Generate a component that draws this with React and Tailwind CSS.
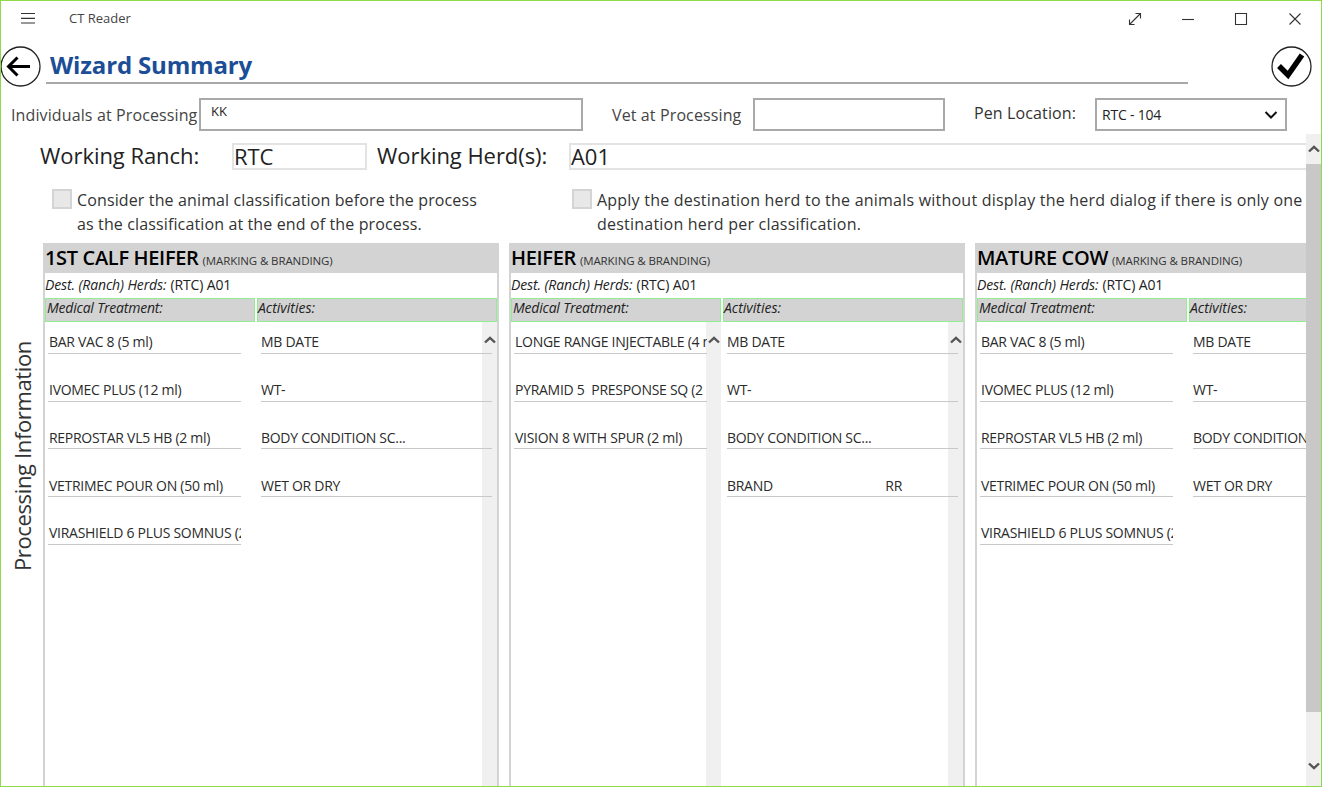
import React from "react";

const F = "font-['Open_Sans','Noto_Sans',sans-serif]";

function Chevron({ dir = "up", className = "" }) {
  return (
    <svg width="12" height="8" viewBox="0 0 12 8" className={className}>
      <path d={dir === "up" ? "M1 6.5 L6 1.8 L11 6.5" : "M1 1.5 L6 6.2 L11 1.5"} fill="none" stroke="#555" strokeWidth="2.4" />
    </svg>
  );
}

function Row({ text, extra, w, inset }) {
  return (
    <div className={`h-[47.75px] ${w} shrink-0 border-b border-[#c8c8c8] flex items-end`}>
      <div className={`flex h-[22px] w-full items-center overflow-hidden whitespace-pre ${inset} text-[14px] tracking-[-0.28px] text-[#2b2b2b]`}>
        <span>{text}</span>
        {extra && <span className="ml-auto mr-[56px]">{extra}</span>}
      </div>
    </div>
  );
}

function ListColumn({ items, width, pad, rowW, scroll, inset }) {
  return (
    <div className={`relative h-full shrink-0 ${width} ${pad}`}>
      {scroll && (
        <div className="absolute right-0 top-0 bottom-0 flex w-[15px] justify-center bg-[#f0f0f0] pt-[14px]">
          <Chevron />
        </div>
      )}
      <div className="relative -mt-[16px] flex flex-col">
        {items.map((it, i) => (
          <Row key={i} text={it.t} extra={it.x} w={rowW} inset={inset} />
        ))}
      </div>
    </div>
  );
}

function Panel({ title, medical, activities, medScroll, actScroll }) {
  return (
    <div className="flex h-full w-[456px] shrink-0 flex-col border-x-2 border-t-0 border-[#d3d3d3]">
      <div className="-mx-[2px] flex h-[30px] shrink-0 items-center whitespace-nowrap bg-[#d3d3d3] pl-[2px] text-black">
        <span className="text-[20px] font-semibold tracking-[-0.33px]">{title}</span>
        <span className="ml-[4px] mt-[5px] text-[11.5px] tracking-[-0.1px] text-[#333]">(MARKING &amp; BRANDING)</span>
      </div>
      <div className="flex h-[25px] shrink-0 items-center whitespace-nowrap pb-[2px] text-[14px] tracking-[-0.12px] text-[#222]">
        <span className="italic">Dest. (Ranch) Herds:</span>
        <span className="ml-[4px]">(RTC) A01</span>
      </div>
      <div className="flex h-[24px] shrink-0 gap-[2px] text-[14px] italic tracking-[-0.2px] text-[#222]">
        <div className="w-[210px] border border-[#90ee90] bg-[#d3d3d3] pl-[1px] leading-[17px]">Medical Treatment:</div>
        <div className="w-[240px] border border-[#90ee90] bg-[#d3d3d3] leading-[17px] tracking-[0px]">Activities:</div>
      </div>
      <div className="flex min-h-0 flex-1 gap-[2px] overflow-hidden">
        <ListColumn items={medical} width="w-[210px]" pad="pl-[3px]" rowW="w-[193px]" inset="pl-[1px]" scroll={medScroll} />
        <ListColumn items={activities} width="w-[240px]" pad="pl-[4px]" rowW="w-[231px]" inset="pl-0" scroll={actScroll} />
      </div>
    </div>
  );
}

const med1 = [
  { t: "BAR VAC 8 (5 ml)" },
  { t: "IVOMEC PLUS (12 ml)" },
  { t: "REPROSTAR VL5 HB (2 ml)" },
  { t: "VETRIMEC POUR ON (50 ml)" },
  { t: "VIRASHIELD 6 PLUS SOMNUS (2 ml)" },
];
const act1 = [{ t: "MB DATE" }, { t: "WT-" }, { t: "BODY CONDITION SC..." }, { t: "WET OR DRY" }];
const med2 = [
  { t: "LONGE RANGE INJECTABLE (4 ml)" },
  { t: "PYRAMID 5  PRESPONSE SQ (2 ml)" },
  { t: "VISION 8 WITH SPUR (2 ml)" },
];
const act2 = [{ t: "MB DATE" }, { t: "WT-" }, { t: "BODY CONDITION SC..." }, { t: "BRAND", x: "RR" }];

export default function App() {
  return (
    <div className={`${F} flex h-[787px] w-[1322px] flex-col overflow-hidden border border-[#8fd94a] bg-white text-[#333]`}>
      {/* title bar */}
      <div className="flex h-[44px] shrink-0 items-start">
        <svg width="16" height="12" viewBox="0 0 16 12" className="ml-[19px] mt-[11px]">
          <path d="M1 1.5H15M1 6.3H15M1 11H15" stroke="#333" strokeWidth="1.2" fill="none" />
        </svg>
        <span className="ml-[33px] mt-[8px] text-[13px] leading-[18px] text-[#444]">CT Reader</span>
        <div className="ml-auto flex items-start">
          <svg width="16" height="16" viewBox="0 0 16 16" className="mt-[10px] mr-[38px]">
            <path d="M2.5 13.5 L13.5 2.5 M8.5 2.5H13.5V7.5 M2.5 8.5V13.5H7.5" stroke="#333" strokeWidth="1.1" fill="none" />
          </svg>
          <svg width="14" height="14" viewBox="0 0 14 14" className="mt-[11px] mr-[39px]">
            <path d="M1 7.5H13" stroke="#333" strokeWidth="1.1" fill="none" />
          </svg>
          <svg width="14" height="14" viewBox="0 0 14 14" className="mt-[11px] mr-[40px]">
            <path d="M1.5 1.5H12.5V12.5H1.5Z" stroke="#333" strokeWidth="1.1" fill="none" />
          </svg>
          <svg width="14" height="14" viewBox="0 0 14 14" className="mt-[11px] mr-[19px]">
            <path d="M1.5 1.5L12.5 12.5M12.5 1.5L1.5 12.5" stroke="#333" strokeWidth="1.1" fill="none" />
          </svg>
        </div>
      </div>

      {/* heading */}
      <div className="flex h-[53px] shrink-0 items-start">
        <svg width="41" height="41" viewBox="0 0 41 41" className="-ml-[1px] mt-[1px] shrink-0">
          <circle cx="20.5" cy="20.5" r="19.5" fill="white" stroke="#222" strokeWidth="1.3" />
          <path d="M30 20.5H9M17.5 11.5L8.5 20.5L17.5 29.5" fill="none" stroke="#000" strokeWidth="3" />
        </svg>
        <div className="ml-[5px] h-[39px] w-[1142px] shrink-0 border-b-2 border-[#a8a8a8] pl-[4px] text-[24px] font-bold leading-[39px] tracking-[-0.15px] text-[#1b4e96]">
          Wizard Summary
        </div>
        <svg width="41" height="41" viewBox="0 0 41 41" className="ml-[83px] mt-[1px] shrink-0">
          <circle cx="20.5" cy="20.5" r="19.5" fill="white" stroke="#222" strokeWidth="1.3" />
          <path d="M8 20L17 29L31 9" fill="none" stroke="#000" strokeWidth="5.5" />
        </svg>
      </div>

      {/* form row */}
      <div className="flex h-[33px] shrink-0 items-stretch text-[16px] tracking-[0.12px]">
        <span className="ml-[10px] flex w-[188px] items-center whitespace-nowrap text-[#444]">Individuals at Processing</span>
        <div className="w-[384px] border-2 border-[#a9a9a9] pl-[10px] pt-[2px] text-[13px] leading-[18px] text-[#222]">KK</div>
        <span className="ml-[29px] flex w-[141px] items-center whitespace-nowrap text-[#444]">Vet at Processing</span>
        <div className="w-[192px] border-2 border-[#a9a9a9]" />
        <span className="ml-[29px] flex w-[121px] items-center whitespace-nowrap pb-[3px] text-[#333]">Pen Location:</span>
        <div className="flex w-[192px] items-center justify-between border-2 border-[#a9a9a9] pl-[5px] pr-[7px] text-[14px] tracking-[-0.2px] text-[#222]">
          <span>RTC - 104</span>
          <svg width="14" height="10" viewBox="0 0 14 10">
            <path d="M1.5 2L7 7.5L12.5 2" fill="none" stroke="#111" strokeWidth="2" />
          </svg>
        </div>
      </div>

      {/* scroll area */}
      <div className="mt-[3px] flex min-h-0 flex-1">
        <div className="flex min-w-0 flex-1 flex-col overflow-hidden">
          <div className="mt-[9px] flex h-[27px] shrink-0 items-stretch whitespace-nowrap text-[22px] leading-[25px] tracking-[-0.05px] text-[#222]">
            <span className="ml-[39px] flex w-[192px] items-center pb-[2px]">Working Ranch:</span>
            <div className="flex w-[135px] items-center border-2 border-[#e3e3e3]">RTC</div>
            <span className="ml-[10px] flex w-[192px] items-center pb-[2px]">Working Herd(s):</span>
            <div className="flex flex-1 items-center border-y-2 border-l-2 border-[#e3e3e3]">A01</div>
          </div>
          <div className="mt-[16px] flex h-[48px] shrink-0 text-[16px] leading-[24px] text-[#333]">
            <div className="ml-[51px] mt-[3px] h-[20px] w-[20px] shrink-0 border-2 border-[#d4d4d4] bg-[#e8e8e8]" />
            <div className="ml-[5px] mt-[2px] w-[475px] shrink-0 whitespace-nowrap tracking-[0.13px]">
              Consider the animal classification before the process
              <br />
              as the classification at the end of the process.
            </div>
            <div className="ml-[20px] mt-[3px] h-[20px] w-[20px] shrink-0 border-2 border-[#d4d4d4] bg-[#e8e8e8]" />
            <div className="ml-[5px] mt-[2px] whitespace-nowrap tracking-[0.22px]">
              Apply the destination herd to the animals without display the herd dialog if there is only one
              <br />
              destination herd per classification.
            </div>
          </div>
          <div className="mt-[9px] flex min-h-0 flex-1">
            <div className="flex w-[42px] shrink-0 items-center justify-center pb-[116px]">
              <span className="rotate-180 whitespace-nowrap text-[22px] tracking-[-0.36px] text-[#333] [writing-mode:vertical-rl]">Processing Information</span>
            </div>
            <div className="flex min-h-0 gap-[10px]">
              <Panel title="1ST CALF HEIFER" medical={med1} activities={act1} actScroll />
              <Panel title="HEIFER" medical={med2} activities={act2} medScroll actScroll />
              <Panel title="MATURE COW" medical={med1} activities={act1} />
            </div>
          </div>
        </div>
        {/* scrollbar */}
        <div className="flex w-[15px] shrink-0 flex-col items-center bg-[#f0f0f0]">
          <div className="flex h-[30px] w-full shrink-0 items-center justify-center">
            <Chevron />
          </div>
          <div className="h-[548px] w-full shrink-0 bg-[#c8c8c8]" />
          <div className="flex flex-1 items-end pb-[16px]">
            <Chevron dir="down" />
          </div>
        </div>
      </div>
    </div>
  );
}
